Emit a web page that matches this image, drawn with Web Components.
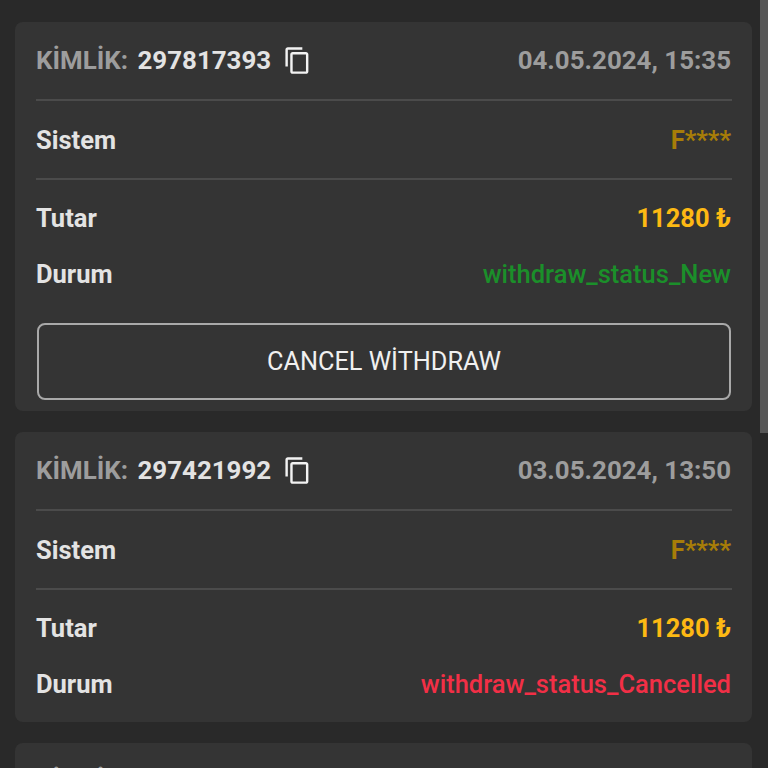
<!DOCTYPE html>
<html lang="tr">
<head>
<meta charset="utf-8">
<title>Withdraw history</title>
<style>
  html, body { margin: 0; height: 768px; overflow: hidden; background: #292929; }
  body { font-family: Roboto, "Liberation Sans", sans-serif; }
</style>
</head>
<body>
<withdraw-list>
  <withdraw-card record-id="297817393" date="04.05.2024, 15:35" amount="11280 ₺" status="withdraw_status_New" status-color="green" cancel></withdraw-card>
  <withdraw-card record-id="297421992" date="03.05.2024, 13:50" amount="11280 ₺" status="withdraw_status_Cancelled" status-color="red"></withdraw-card>
  <withdraw-card record-id="297000000" date="02.05.2024, 10:20" amount="11280 ₺" status="withdraw_status_New" status-color="green"></withdraw-card>
</withdraw-list>

<script>
class CopyIcon extends HTMLElement {
  constructor() {
    super();
    this.attachShadow({ mode: "open" });
  }

  connectedCallback() {
    this.shadowRoot.innerHTML = `
    <style>
      :host { display: inline-flex; width: 29px; height: 29px; color: #f2f2f2; }
      svg { width: 100%; height: 100%; fill: currentColor; }
    </style>
    <svg viewBox="0 0 24 24"><path d="M16 1H4c-1.1 0-2 .9-2 2v14h2V3h12V1zm3 4H8c-1.1 0-2 .9-2 2v14c0 1.1.9 2 2 2h11c1.1 0 2-.9 2-2V7c0-1.1-.9-2-2-2zm0 16H8V7h11v14z"/></svg>
    `;
  }
}

class InfoRow extends HTMLElement {
  constructor() {
    super();
    this.attachShadow({ mode: "open" });
  }

  connectedCallback() {
    this.shadowRoot.innerHTML = `
    <style>
      :host {
        display: flex;
        align-items: center;
        justify-content: space-between;
        height: 24px;
        font-size: 25.5px;
        font-weight: 700;
        line-height: 24px;
        color: #e3e3e3;
      }
      .value { color: var(--value-color, #e3e3e3); font-weight: var(--value-weight, 700); }
    </style>
    <span><slot name="label"></slot></span>
    <span class="value"><slot name="value"></slot></span>
    `;
  }
}

class WithdrawCard extends HTMLElement {
  constructor() {
    super();
    this.attachShadow({ mode: "open" });
  }

  connectedCallback() {
    const id = this.getAttribute("record-id");
    const date = this.getAttribute("date");
    const amount = this.getAttribute("amount");
    const status = this.getAttribute("status");
    const statusColor = this.getAttribute("status-color");
    const cancel = this.hasAttribute("cancel");

    this.shadowRoot.innerHTML = `
    <style>${cardCss}</style>
    <header class="head">
      <span class="id"><span class="muted label">KİMLİK:</span> ${id}<copy-icon></copy-icon></span>
      <span class="muted">${date}</span>
    </header>
    <hr>
    <info-row class="system">
      <span slot="label">Sistem</span>
      <span slot="value">F****</span>
    </info-row>
    <hr>
    <info-row class="amount">
      <span slot="label">Tutar</span>
      <span slot="value">${amount}</span>
    </info-row>
    <info-row class="status color-${statusColor}">
      <span slot="label">Durum</span>
      <span slot="value">${status}</span>
    </info-row>
    ${cancel ? `<button>CANCEL WİTHDRAW</button>` : ""}
    `;
  }
}

const cardCss = `
    :host {
      display: block;
      padding: 26px 21px 26px 21px;
      background: #343434;
      border-radius: 8px;
    }
    .head {
      display: flex;
      align-items: center;
      justify-content: space-between;
      height: 24px;
      font-size: 25.9px;
      font-weight: 700;
      line-height: 24px;
      color: #e3e3e3;
    }
    .id { display: inline-flex; align-items: center; white-space: pre; }
    .label { margin-right: 3px; }
    copy-icon { margin-left: 12px; }
    .muted { color: #9d9d9d; }
    hr {
      height: 2px;
      margin: 27px -1px 0 0;
      border: 0;
      background: #4b4b4b;
    }
    .system { margin-top: 27px; --value-color: #a77d08; }
    .system + hr { margin-top: 26px; }
    .amount { margin-top: 26px; --value-color: #fdb913; }
    .status { margin-top: 32px; --value-weight: 500; }
    .color-green { --value-color: #1b8f2a; }
    .color-red { --value-color: #f22f46; }
    button {
      display: block;
      box-sizing: border-box;
      width: calc(100% - 1px);
      height: 77px;
      margin: 37px 0 -15px 1px;
      padding: 0;
      background: transparent;
      border: 2px solid #a9a9a9;
      border-radius: 8px;
      color: #f0f0f0;
      font: 400 25.3px Roboto, "Liberation Sans", sans-serif;
    }
`;

class WithdrawList extends HTMLElement {
  constructor() {
    super();
    this.attachShadow({ mode: "open" });
  }

  connectedCallback() {
    this.shadowRoot.innerHTML = `
    <style>
      :host {
        display: flex;
        flex-direction: column;
        gap: 21px;
        height: 768px;
        box-sizing: border-box;
        padding: 22px 16px 0 15px;
        overflow: hidden;
        position: relative;
      }
      .thumb {
        position: absolute;
        top: 0;
        right: 0;
        width: 8px;
        height: 433px;
        background: #575757;
      }
    </style>
    <slot></slot>
    <div class="thumb"></div>
    `;
  }
}

customElements.define("copy-icon", CopyIcon);
customElements.define("info-row", InfoRow);
customElements.define("withdraw-card", WithdrawCard);
customElements.define("withdraw-list", WithdrawList);
</script>
</body>
</html>
